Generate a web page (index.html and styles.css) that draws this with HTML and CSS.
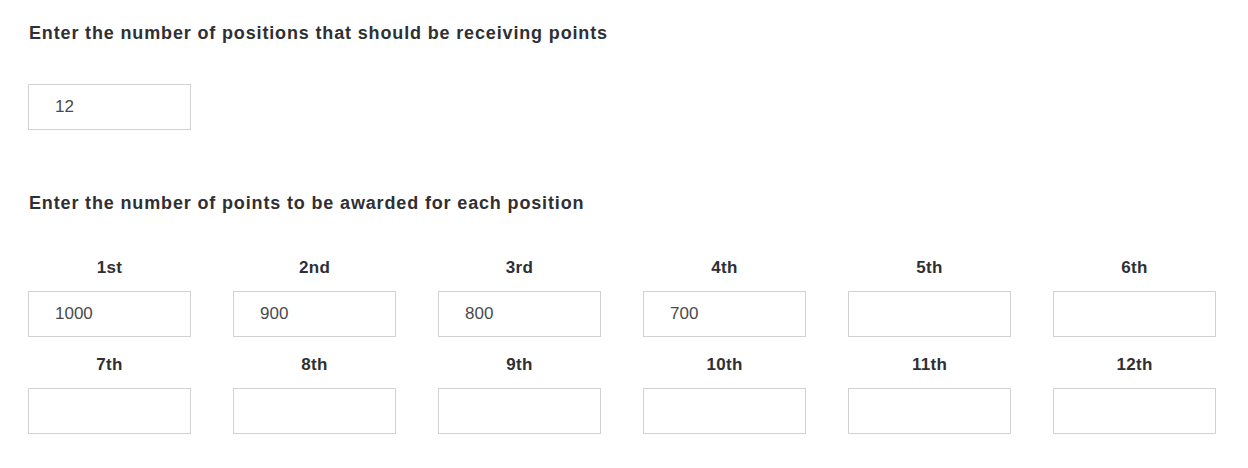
FILE: index.html
```html
<!DOCTYPE html>
<html>
<head>
<meta charset="utf-8">
<link rel="stylesheet" href="styles.css">
</head>
<body>
<div class="page">
  <p class="heading">Enter the number of positions that should be receiving points</p>
  <input class="field count" type="text" value="12">
  <p class="heading second">Enter the number of points to be awarded for each position</p>
  <div class="grid">
    <div class="cell"><div class="label">1st</div><input class="field" type="text" value="1000"></div>
    <div class="cell"><div class="label">2nd</div><input class="field" type="text" value="900"></div>
    <div class="cell"><div class="label">3rd</div><input class="field" type="text" value="800"></div>
    <div class="cell"><div class="label">4th</div><input class="field" type="text" value="700"></div>
    <div class="cell"><div class="label">5th</div><input class="field" type="text" value=""></div>
    <div class="cell"><div class="label">6th</div><input class="field" type="text" value=""></div>
    <div class="cell"><div class="label">7th</div><input class="field" type="text" value=""></div>
    <div class="cell"><div class="label">8th</div><input class="field" type="text" value=""></div>
    <div class="cell"><div class="label">9th</div><input class="field" type="text" value=""></div>
    <div class="cell"><div class="label">10th</div><input class="field" type="text" value=""></div>
    <div class="cell"><div class="label">11th</div><input class="field" type="text" value=""></div>
    <div class="cell"><div class="label">12th</div><input class="field" type="text" value=""></div>
  </div>
</div>
</body>
</html>
```
FILE: styles.css
```css
html, body {
  margin: 0;
  padding: 0;
  background: #ffffff;
}
.page {
  padding: 23px 28px;
  font-family: "Liberation Sans", Arial, sans-serif;
  color: #333333;
}
.heading {
  margin: 0 0 0 1px;
  font-size: 18px;
  line-height: 20px;
  font-weight: bold;
  letter-spacing: 0.85px;
  color: #2f3033;
}
.heading.second {
  margin-top: 63px;
}
.field {
  display: block;
  box-sizing: border-box;
  width: 163px;
  height: 46px;
  margin: 0;
  padding: 0 0 0 26px;
  border: 1px solid #d2d2d2;
  border-radius: 0;
  background: #ffffff;
  font-family: "Liberation Sans", Arial, sans-serif;
  font-size: 17px;
  color: #4a4a4a;
  outline: none;
}
.count {
  margin-top: 41px;
}
.grid {
  margin-top: 45px;
  display: grid;
  grid-template-columns: repeat(6, 163px);
  column-gap: 42px;
  row-gap: 18px;
}
.cell {
  display: flex;
  flex-direction: column;
  gap: 13px;
}
.label {
  text-align: center;
  font-size: 17px;
  line-height: 20px;
  font-weight: bold;
  letter-spacing: 0.3px;
  color: #2f3033;
}
```
